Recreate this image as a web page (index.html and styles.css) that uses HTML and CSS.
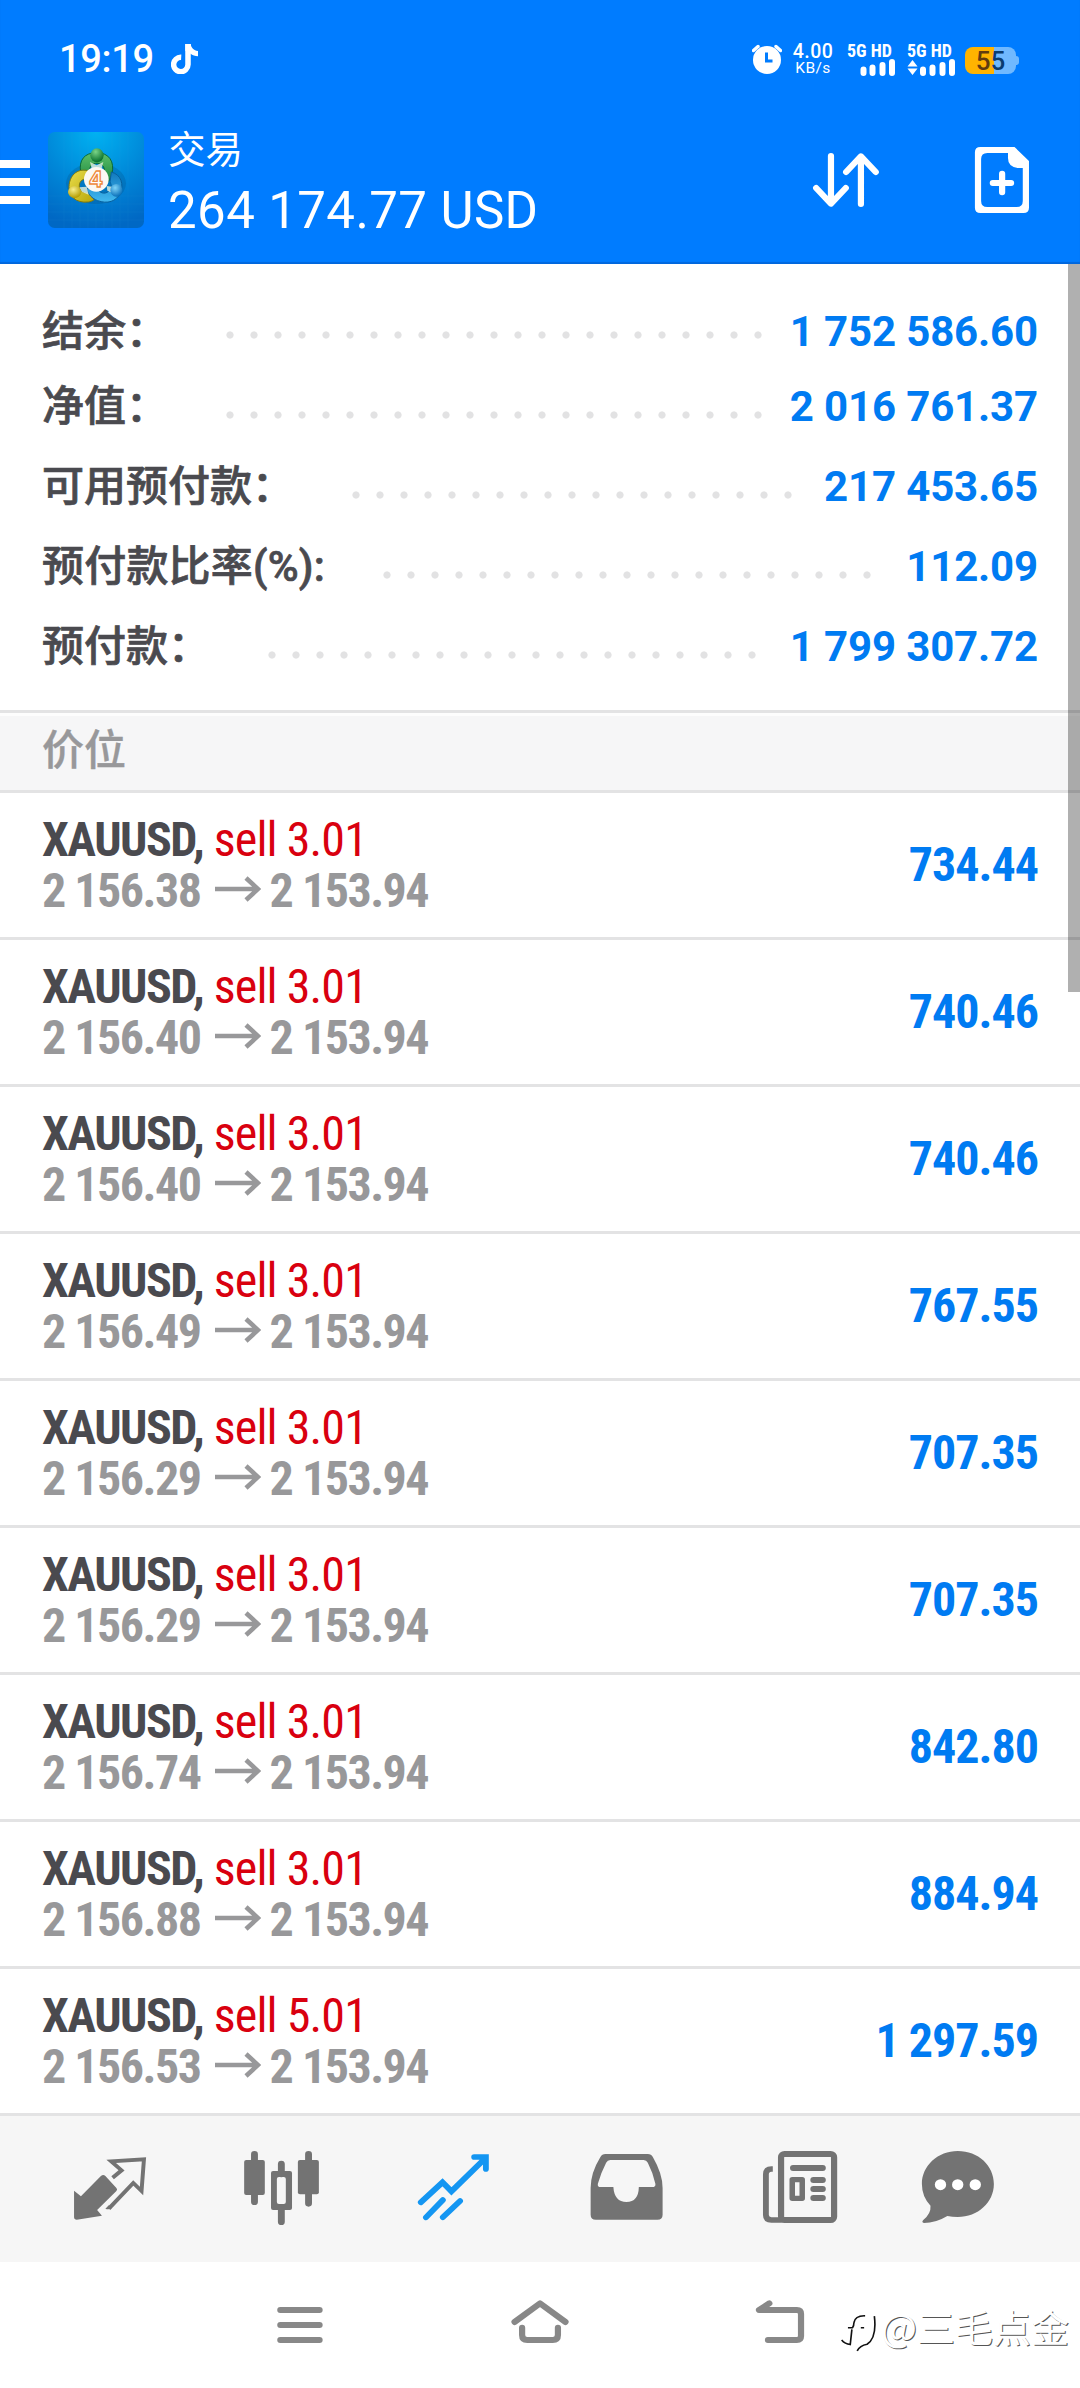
FILE: index.html
```html
<!DOCTYPE html>
<html lang="zh-CN">
<head>
<meta charset="utf-8">
<title>交易</title>
<link rel="stylesheet" href="styles.css">
</head>
<body>
<div class="screen">
  <header class="header">
    <div class="status">
      <span class="time">19:19</span>
      <svg class="note" viewBox="0 0 27 30"><path d="M17 0v20.500a7.200 7.200 0 1 1-6.800-7.200" fill="none" stroke="#fff" stroke-width="5.500"/><path d="M14.300 0h5.400c.6 4 3 6.500 7.300 7v5.200c-3 0-5.500-1-7.500-2.500l-5.200-3z" fill="#fff"/></svg>
      <div class="status-right">
        <svg class="clock" viewBox="0 0 30 30"><circle cx="15" cy="16" r="14" fill="#fff"/><path d="M1.500 6.500l4.500-4M28.500 6.500l-4.500-4" stroke="#fff" stroke-width="3.400" stroke-linecap="round"/><path d="M14.500 8.500v8.500h6" stroke="#007cff" stroke-width="3" fill="none"/></svg>
        <div class="rate"><span>4.00</span><small>KB/s</small></div>
        <div class="signal"><span>5G HD</span><svg viewBox="0 0 48 17"><path d="M16.500 10.500v3.500M25.500 8.500v5.500M35.500 6v8M45 3v11" stroke="#fff" stroke-width="6" stroke-linecap="round"/></svg></div>
        <div class="signal second"><span>5G HD</span><svg viewBox="0 0 48 17"><path d="M16 10.500v3.500M25.500 8.500v5.500M35.500 6v8M45 3v11" stroke="#fff" stroke-width="6" stroke-linecap="round"/><path d="M5.500 1l5 6.500h-10zM5.500 16l5-6.500h-10z" fill="#fff"/></svg></div>
        <div class="battery"><span><b>5</b>5</span></div>
      </div>
    </div>
    <div class="appbar">
      <svg class="menu" viewBox="0 0 30 44"><path d="M0 0h30v8H0zM0 18h30v8H0zM0 36h30v8H0z" fill="#fff"/></svg>
      <svg class="logo" viewBox="24 36 288 288">
        <defs>
          <radialGradient id="sky" cx=".5" cy="0" r="1"><stop offset="0" stop-color="#00b2f2"/><stop offset=".55" stop-color="#0087d8"/><stop offset="1" stop-color="#0068c4"/></radialGradient>
          <linearGradient id="green" x2="0" y2="1"><stop offset="0" stop-color="#5cc06a"/><stop offset="1" stop-color="#127f38"/></linearGradient>
          <linearGradient id="yellow" x2="1" y2="1"><stop offset="0" stop-color="#e9dc4a"/><stop offset="1" stop-color="#b8a70a"/></linearGradient>
          <linearGradient id="blue" x2="0" y2="1"><stop offset="0" stop-color="#1178bd"/><stop offset="1" stop-color="#42b9f0"/></linearGradient>
          <radialGradient id="gb" cx=".4" cy=".25" r=".7"><stop offset="0" stop-color="#7ad487"/><stop offset="1" stop-color="#0c7430"/></radialGradient>
          <radialGradient id="yb" cx=".4" cy=".3" r=".7"><stop offset="0" stop-color="#f7ee8a"/><stop offset="1" stop-color="#b59c00"/></radialGradient>
          <radialGradient id="bb" cx=".4" cy=".3" r=".7"><stop offset="0" stop-color="#7fd4f8"/><stop offset="1" stop-color="#0a70ba"/></radialGradient>
        </defs>
        <rect x="24" y="36" width="288" height="288" rx="20" fill="url(#sky)"/>
        <path d="M72 36v288M96 36v288M120 36v288M144 36v288M168 36v288M192 36v288M216 36v288M240 36v288M264 36v288M24 228h288M24 252h288M24 276h288M24 300h288" stroke="#4db7ee" stroke-opacity=".14" stroke-width="1.500"/>
        <ellipse cx="168" cy="190" rx="90" ry="62" fill="#034a80" opacity=".25"/>
        <path d="M122 156c-6-34 10-58 48-58s54 28 46 62c-4 18-14 32-26 38l-8-24c18-14 14-42-8-44-20-2-26 12-26 28z" fill="url(#green)" stroke="#0b6b34" stroke-width="3"/>
        <path d="M144 152c-34-8-56 16-57 48-1 28 20 50 58 46 6-1 12-3 17-7l-12-22c-20 4-34-4-32-22 1-10 8-18 20-18z" fill="url(#yellow)" stroke="#81790d" stroke-width="3"/>
        <path d="M214 156c30 8 38 38 27 62-12 28-40 34-68 24-16-6-30-20-33-36l28-4c10 18 26 22 38 12 9-8 10-18 4-28z" fill="url(#blue)" stroke="#07609e" stroke-width="3"/>
        <path d="M150 126l20 10 20-10-8 30h-24zM118 202l22-2 6 24-20-8zM200 198l16 2v18l-14-6z" fill="#e7f3dd" opacity=".8"/>
        <ellipse cx="171" cy="106" rx="20" ry="21" fill="url(#gb)"/>
        <ellipse cx="104" cy="216" rx="20" ry="18" fill="url(#yb)"/>
        <ellipse cx="229" cy="211" rx="18" ry="19" fill="url(#bb)"/>
        <circle cx="169" cy="178" r="37" fill="#fbf8f3"/>
        <text x="168" y="201" class="logo-four">4</text>
      </svg>
      <div class="titles"><div class="title">交易</div><div class="total">264 174.77 USD</div></div>
      <svg class="action" preserveAspectRatio="none" viewBox="772.500 420 232.300 240"><path d="M845 468V610M802 564l43 47 43-47M932 612V470M889 516l43-47 43 47" fill="none" stroke="#fff" stroke-width="18" stroke-linecap="round" stroke-linejoin="round"/></svg>
      <svg class="action" preserveAspectRatio="none" viewBox="1225.500 420 232.300 240"><path fill="#fff" fill-rule="evenodd" d="M1279 441h99l42 42v140q0 16-16 16h-125q-16 0-16-16V457q0-16 16-16zm20 18q-18 0-18 18v126q0 18 18 18h85q18 0 18-18V504h-15q-28-4-28-30v-15z"/><path d="M1342 521v56M1315 549h53" stroke="#fff" stroke-width="18" stroke-linecap="round"/></svg>
    </div>
  </header>

  <main class="content">
    <section class="summary">
      <div class="line first"><span class="label">结余：</span><i class="dots" style="--dots:23"></i><b class="amount">1 752 586.60</b></div>
      <div class="line"><span class="label">净值：</span><i class="dots" style="--dots:23"></i><b class="amount">2 016 761.37</b></div>
      <div class="line"><span class="label">可用预付款：</span><i class="dots" style="--dots:19"></i><b class="amount">217 453.65</b></div>
      <div class="line"><span class="label ratio">预付款比率(%):</span><i class="dots" style="--dots:21"></i><b class="amount">112.09</b></div>
      <div class="line"><span class="label">预付款：</span><i class="dots" style="--dots:21"></i><b class="amount">1 799 307.72</b></div>
    </section>
    <h2 class="section">价位</h2>
    <ul class="positions">
      <li><div><p class="deal"><b>XAUUSD,</b> <span>sell 3.01</span></p><p class="prices"><span>2 156.38</span><svg class="arrow" viewBox="0 0 46 26"><path d="M0 13h42M31 2l12 11-12 11" fill="none" stroke="#98989a" stroke-width="4.600"/></svg><span>2 153.94</span></p></div><b class="profit">734.44</b></li>
      <li><div><p class="deal"><b>XAUUSD,</b> <span>sell 3.01</span></p><p class="prices"><span>2 156.40</span><svg class="arrow" viewBox="0 0 46 26"><path d="M0 13h42M31 2l12 11-12 11" fill="none" stroke="#98989a" stroke-width="4.600"/></svg><span>2 153.94</span></p></div><b class="profit">740.46</b></li>
      <li><div><p class="deal"><b>XAUUSD,</b> <span>sell 3.01</span></p><p class="prices"><span>2 156.40</span><svg class="arrow" viewBox="0 0 46 26"><path d="M0 13h42M31 2l12 11-12 11" fill="none" stroke="#98989a" stroke-width="4.600"/></svg><span>2 153.94</span></p></div><b class="profit">740.46</b></li>
      <li><div><p class="deal"><b>XAUUSD,</b> <span>sell 3.01</span></p><p class="prices"><span>2 156.49</span><svg class="arrow" viewBox="0 0 46 26"><path d="M0 13h42M31 2l12 11-12 11" fill="none" stroke="#98989a" stroke-width="4.600"/></svg><span>2 153.94</span></p></div><b class="profit">767.55</b></li>
      <li><div><p class="deal"><b>XAUUSD,</b> <span>sell 3.01</span></p><p class="prices"><span>2 156.29</span><svg class="arrow" viewBox="0 0 46 26"><path d="M0 13h42M31 2l12 11-12 11" fill="none" stroke="#98989a" stroke-width="4.600"/></svg><span>2 153.94</span></p></div><b class="profit">707.35</b></li>
      <li><div><p class="deal"><b>XAUUSD,</b> <span>sell 3.01</span></p><p class="prices"><span>2 156.29</span><svg class="arrow" viewBox="0 0 46 26"><path d="M0 13h42M31 2l12 11-12 11" fill="none" stroke="#98989a" stroke-width="4.600"/></svg><span>2 153.94</span></p></div><b class="profit">707.35</b></li>
      <li><div><p class="deal"><b>XAUUSD,</b> <span>sell 3.01</span></p><p class="prices"><span>2 156.74</span><svg class="arrow" viewBox="0 0 46 26"><path d="M0 13h42M31 2l12 11-12 11" fill="none" stroke="#98989a" stroke-width="4.600"/></svg><span>2 153.94</span></p></div><b class="profit">842.80</b></li>
      <li><div><p class="deal"><b>XAUUSD,</b> <span>sell 3.01</span></p><p class="prices"><span>2 156.88</span><svg class="arrow" viewBox="0 0 46 26"><path d="M0 13h42M31 2l12 11-12 11" fill="none" stroke="#98989a" stroke-width="4.600"/></svg><span>2 153.94</span></p></div><b class="profit">884.94</b></li>
      <li><div><p class="deal"><b>XAUUSD,</b> <span>sell 5.01</span></p><p class="prices"><span>2 156.53</span><svg class="arrow" viewBox="0 0 46 26"><path d="M0 13h42M31 2l12 11-12 11" fill="none" stroke="#98989a" stroke-width="4.600"/></svg><span>2 153.94</span></p></div><b class="profit">1 297.59</b></li>
    </ul>
    <div class="scrollbar"></div>
  </main>

  <nav class="tabs">
    <svg preserveAspectRatio="none" viewBox="174.200 90 290.400 300"><path fill="#737373" d="M215 242l20 17 58-61q7-6 13 0l32 36q4 5 0 9l-56 57 14 17-73 12q-8 0-8-8z"/><path d="M327 203l26-22-30-27 95-6-7 95-24-24-71 77" fill="none" stroke="#737373" stroke-width="11.500"/><path d="M306 296l10-10 8 8q-8 7-18 2z" fill="#737373"/></svg>
    <svg preserveAspectRatio="none" viewBox="673.700 90 290.400 300"><g stroke="#737373" stroke-width="20" stroke-linecap="round"><path d="M739 133v142M896 133v147M817 162v30M817 300v35"/></g><rect x="709" y="150" width="60" height="105" rx="6" fill="#737373"/><rect x="865" y="150" width="61" height="103" rx="6" fill="#737373"/><path fill="#737373" fill-rule="evenodd" d="M793 183h49q6 0 6 6v105q0 6-6 6h-49q-6 0-6-6V189q0-6 6-6zm17 18q-6 0-6 6v69q0 6 6 6h14q6 0 6-6v-69q0-6-6-6z"/></svg>
    <svg preserveAspectRatio="none" viewBox="1173.200 90 290.400 300"><path d="M1222 277l63-60 26 27 99-100M1377 141h34v36M1237 322l49-52M1286 322l50-49" fill="none" stroke="#1496f2" stroke-width="17" stroke-linecap="round"/></svg>
    <svg preserveAspectRatio="none" viewBox="104.500 90 290.400 300"><path fill="#737373" fill-rule="evenodd" d="M190 132h123q10 0 15 10 28 50 28 92v80q0 15-15 15H162q-15 0-15-15v-80q0-45 28-92 5-10 15-10zm14 18q-8 0-12 8-15 30-24 63-2 10 8 10h37q3 45 38 45t36-45h38q12 0 10-10-7-33-22-63-4-8-12-8z"/></svg>
    <svg preserveAspectRatio="none" viewBox="604 90 290.400 300"><rect x="700" y="132" width="154" height="198" rx="10" fill="none" stroke="#737373" stroke-width="18"/><path d="M676 177h-4q-16 0-16 16v122q0 15 16 15h30" fill="none" stroke="#737373" stroke-width="17"/><path d="M735 174h86M794 210h27M794 237h27M794 264h27" stroke="#737373" stroke-width="18" stroke-linecap="round"/><rect x="732.500" y="209" width="29" height="56" fill="none" stroke="#737373" stroke-width="16" stroke-linejoin="round"/></svg>
    <svg preserveAspectRatio="none" viewBox="1103.500 90 290.400 300"><path d="M1213 123c60 0 105 44 105 99s-46 99-105 99q-16 0-30-3-34 21-68 21-8-2-2-9 23-20 21-43-25-27-25-65c0-55 47-99 104-99z" fill="#737373"/><circle cx="1163" cy="224" r="16.500" fill="#fff"/><circle cx="1213" cy="224" r="16.500" fill="#fff"/><circle cx="1264" cy="224" r="16.500" fill="#fff"/></svg>
  </nav>

  <footer class="system">
    <svg preserveAspectRatio="none" viewBox="755 555 232.300 180"><path d="M814 600h114M814 645h114M814 690h114"/></svg>
    <svg preserveAspectRatio="none" viewBox="-116.200 555 232.300 180"><path d="M-74 636L0 580 74 636M-52 653v22q0 15 15 15H37q15 0 15-15V653"/></svg>
    <svg preserveAspectRatio="none" viewBox="580.800 555 232.300 180"><path d="M666 580L636 600H746q12 0 12 12V678q0 12-12 12H662"/></svg>
    <div class="watermark">
      <svg viewBox="30 60 112 132"><path d="M72 98q4-22 34-21M54 113h14q4-4 4-15M93 113h10M66 118l-5 46q-16-2-26-14M134 78q8 66-22 85-22 4-30 20" fill="none" stroke="#111" stroke-width="5"/></svg>
      <span>@三毛点金</span>
    </div>
  </footer>
</div>
</body>
</html>
```
FILE: styles.css
```css
* { box-sizing: border-box; }
body { margin: 0; background: #fff; font-family: Roboto, "Noto Sans CJK SC", sans-serif; }
svg { display: block; flex: none; }
p, h2, ul { margin: 0; padding: 0; }
.screen { width: 1080px; height: 2388px; overflow: hidden; display: flex; flex-direction: column; }

/* Header */
.header { height: 264px; background: #007cff; color: #fff; box-shadow: inset 0 -2px 1px rgba(0, 40, 120, .25); }
.status { height: 96px; padding: 22px 61px 0 59px; display: flex; align-items: center; }
.time { font-size: 38px; font-weight: 500; line-height: 48px; letter-spacing: -.3px; width: 112px; }
.note { width: 27px; height: 30px; }
.status-right { margin-left: auto; display: flex; align-items: center; }
.clock { width: 30px; height: 30px; }
.rate { width: 42px; margin-left: 10px; display: flex; flex-direction: column; align-items: center; font-weight: 500; white-space: nowrap; }
.rate span { font-size: 19.500px; line-height: 17px; letter-spacing: .4px; }
.rate small { font-size: 15.500px; line-height: 16px; letter-spacing: .4px; font-weight: 400; }
.signal { width: 48px; margin-left: 13px; }
.signal.second { margin-left: 12px; }
.signal span { display: block; font-size: 18px; font-weight: 700; font-stretch: 84%; line-height: 16px; white-space: nowrap; }
.signal svg { width: 48px; height: 17px; }
.battery { width: 51px; height: 27px; margin: 3px 3px 0 10px; border-radius: 8px; background: linear-gradient(90deg, #ffb300 57%, #70b9ff 57%); color: #0b3d70; position: relative; text-align: center; font-size: 26px; font-weight: 500; line-height: 29px; }
.battery b { color: #613c10; font-weight: 500; }
.battery::after { content: ""; position: absolute; right: -3px; top: 9px; width: 4px; height: 9px; border-radius: 0 3px 3px 0; background: #70b9ff; }

.appbar { height: 168px; padding-right: 38px; display: flex; align-items: center; }
.menu { width: 30px; height: 44px; margin-top: 4px; }
.logo { width: 96px; height: 96px; margin-left: 18px; }
.logo-four { font: 700 64px Inter, sans-serif; fill: #fff; stroke: #ee8a3c; stroke-width: 4px; text-anchor: middle; }
.titles { flex: 1; margin-left: 24px; padding-top: 5px; white-space: nowrap; }
.title { font: 400 37.500px/46px "Noto Sans CJK SC", sans-serif; }
.total { margin-top: 11px; font-size: 51px; line-height: 60px; letter-spacing: .4px; }
.action { width: 80px; height: 80px; }
.action + .action { margin-left: 76px; }

/* Account summary */
.content { position: relative; height: 1851px; }
.summary { height: 449px; padding: 23px 42px 0; }
.line { height: 80px; display: flex; align-items: baseline; font-size: 42px; }
.label { color: #4a4a4f; font-weight: 500; line-height: 1; white-space: nowrap; -webkit-text-stroke: .7px #4a4a4f; }
.ratio { letter-spacing: .2px; }
.dots { width: calc(var(--dots) * 24px); height: 8px; margin: 44px 0 0 50px; align-self: flex-start; background: radial-gradient(circle at 12px 4px, #e2e2e3 3.200px, transparent 4px) 0 0 / 24px 8px; }
.amount { margin-left: auto; color: #007bf2; line-height: 80px; letter-spacing: -.15px; }
.first .label, .first .amount { position: relative; top: 5px; }
.section { height: 83px; border: solid #e3e3e4; border-width: 3px 0; margin-top: -3px; background: #f6f6f7; padding-left: 42px; box-shadow: inset 0 3px #fdfdfd; color: #98989a; font: 500 42px/68px "Noto Sans CJK SC", sans-serif; -webkit-text-stroke: .4px #98989a; }

/* Positions */
.positions { list-style: none; }
.positions li { height: 147px; padding: 21px 42px 0; border-bottom: 3px solid #e3e3e4; display: flex; justify-content: space-between; font-size: 48px; font-stretch: 75%; line-height: 51px; letter-spacing: -1.500px; white-space: nowrap; }
.deal { color: #4a4a4f; }
.deal span { color: #d9000f; letter-spacing: -.9px; margin-left: 1px; }
.prices { display: flex; align-items: flex-start; color: #98989a; font-weight: 700; }
.arrow { width: 46px; height: 26px; margin: 11px 9px 0 14px; }
.profit { margin-top: -21px; line-height: 144px; color: #007bf2; letter-spacing: -1px; }
.scrollbar { position: absolute; right: 0; top: 0; width: 12px; height: 728px; background: rgba(0, 0, 0, .31); }

/* Bottom bars */
.tabs { height: 147px; padding: 25px 60px 0; background: #f6f6f6; display: flex; gap: 72px; }
.tabs svg { width: 100px; height: 100px; }
.system { position: relative; height: 126px; padding: 33px 0 0 260px; display: flex; gap: 160px; }
.system > svg { width: 80px; height: 60px; fill: none; stroke: #888; stroke-width: 18px; stroke-linecap: round; stroke-linejoin: round; }
.watermark { position: absolute; left: 840px; top: 40px; display: flex; align-items: flex-start; }
.watermark svg { width: 37px; height: 44px; margin-top: 8px; }
.watermark span { margin: -1px 0 0 4px; color: #fff; font: 400 38px/50px "Noto Sans CJK SC", sans-serif; white-space: nowrap; text-shadow: 1px 1px .5px #555; }
```
